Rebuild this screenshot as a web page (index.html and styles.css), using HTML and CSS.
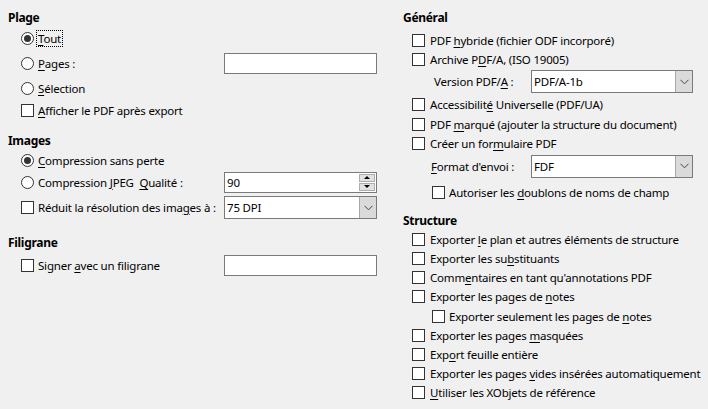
FILE: index.html
```html
<!DOCTYPE html>
<html lang="fr">
<head>
<meta charset="utf-8">
<link rel="stylesheet" href="styles.css">
</head>
<body>
<div class="page">
  <div class="col left">
    <div class="head h-plage">Plage</div>
    <div class="row r-tout"><span class="radio on"></span><span class="lbl focus"><u>T</u>out</span></div>
    <div class="row r-pages"><span class="radio"></span><span class="lbl"><u>P</u>ages :</span><span class="field"></span></div>
    <div class="row r-sel"><span class="radio"></span><span class="lbl"><u>S</u>élection</span></div>
    <div class="row r-aff"><span class="check"></span><span class="lbl"><u>A</u>fficher le PDF après export</span></div>

    <div class="head h-images">Images</div>
    <div class="row r-csp"><span class="radio on"></span><span class="lbl"><u>C</u>ompression sans perte</span></div>
    <div class="row r-jpeg"><span class="radio"></span><span class="lbl">Compression <u>J</u>PEG&nbsp; <u>Q</u>ualité :</span>
      <span class="field spin"><span class="val">90</span><span class="spinbtns"><span class="sb up"></span><span class="sb down"></span></span></span>
    </div>
    <div class="row r-red"><span class="check"></span><span class="lbl">Réduit la résolution des ima<u>g</u>es à :</span>
      <span class="field combo"><span class="val">75 DPI</span><span class="cbtn"><svg width="9" height="6" viewBox="0 0 9 6"><path d="M0.5 0.8 L4.5 4.8 L8.5 0.8" fill="none" stroke="#444" stroke-width="1"/></svg></span></span>
    </div>

    <div class="head h-fili">Filigrane</div>
    <div class="row r-sign"><span class="check"></span><span class="lbl">Signer <u>a</u>vec un filigrane</span><span class="field"></span></div>
  </div>

  <div class="col right">
    <div class="head h-gen">Général</div>
    <div class="row r-hyb"><span class="check"></span><span class="lbl">PDF <u>h</u>ybride (fichier ODF incorporé)</span></div>
    <div class="row r-arch"><span class="check"></span><span class="lbl">Archive P<u>D</u>F/A, (ISO 19005)</span></div>
    <div class="row r-ver"><span class="sublbl ver">Version PDF/<u>A</u> :</span>
      <span class="field combo wide"><span class="val">PDF/A-1b</span><span class="cbtn"><svg width="9" height="6" viewBox="0 0 9 6"><path d="M0.5 0.8 L4.5 4.8 L8.5 0.8" fill="none" stroke="#444" stroke-width="1"/></svg></span></span>
    </div>
    <div class="row r-acc"><span class="check"></span><span class="lbl">Accessibilit<u>é</u> Universelle (PDF/UA)</span></div>
    <div class="row r-marq"><span class="check"></span><span class="lbl">PDF <u>m</u>arqué (ajouter la structure du document)</span></div>
    <div class="row r-form"><span class="check"></span><span class="lbl">Créer un for<u>m</u>ulaire PDF</span></div>
    <div class="row r-fmt"><span class="sublbl fmt"><u>F</u>ormat d'envoi :</span>
      <span class="field combo wide"><span class="val">FDF</span><span class="cbtn"><svg width="9" height="6" viewBox="0 0 9 6"><path d="M0.5 0.8 L4.5 4.8 L8.5 0.8" fill="none" stroke="#444" stroke-width="1"/></svg></span></span>
    </div>
    <div class="row r-dbl indent"><span class="check"></span><span class="lbl">Autoriser les <u>d</u>oublons de noms de champ</span></div>

    <div class="head h-struct">Structure</div>
    <div class="row srow"><span class="check"></span><span class="lbl">Exporter <u>l</u>e plan et autres éléments de structure</span></div>
    <div class="row srow"><span class="check"></span><span class="lbl">Exporter les su<u>b</u>stituants</span></div>
    <div class="row srow"><span class="check"></span><span class="lbl">Comm<u>e</u>ntaires en tant qu'annotations PDF</span></div>
    <div class="row srow"><span class="check"></span><span class="lbl">Exporter les pages de <u>n</u>otes</span></div>
    <div class="row srow indent tall"><span class="check"></span><span class="lbl">Exporter seulement les pages de <u>n</u>otes</span></div>
    <div class="row srow"><span class="check"></span><span class="lbl">Exporter les pages <u>m</u>asquées</span></div>
    <div class="row srow"><span class="check"></span><span class="lbl">Exp<u>o</u>rt feuille entière</span></div>
    <div class="row srow"><span class="check"></span><span class="lbl">Exporter les pages <u>v</u>ides insérées automatiquement</span></div>
    <div class="row srow"><span class="check"></span><span class="lbl"><u>U</u>tiliser les XObjets de référence</span></div>
  </div>
</div>
</body>
</html>
```

FILE: styles.css
```css
* { box-sizing: border-box; }
html, body {
  margin: 0;
  padding: 0;
  background: #f0f0f0;
}
body {
  width: 708px;
  height: 409px;
  overflow: hidden;
  font-family: "Noto Sans", "Open Sans", sans-serif;
  font-size: 11.5px;
  letter-spacing: -0.2px;
  color: #000;
}
u { text-decoration: underline; text-underline-offset: 2px; }

.page {
  display: grid;
  grid-template-columns: 369px 305px;
  column-gap: 26px;
  padding: 7px 0 0 8px;
}
.col { display: flex; flex-direction: column; }

.head {
  font-weight: bold;
  font-size: 12px;
  letter-spacing: -0.3px;
  height: 21px;
  display: flex;
  align-items: center;
}

.row {
  display: flex;
  align-items: center;
  padding-left: 13px;
  white-space: nowrap;
}
.lbl { margin-left: 4px; line-height: 15px; }
.focus { outline: 1px dotted #000; outline-offset: 0; padding: 0 1px; margin-left: 3px; }

.radio {
  width: 13px; height: 13px;
  border: 1px solid #333;
  border-radius: 50%;
  background: #fff;
  flex: none;
  display: flex; align-items: center; justify-content: center;
}
.radio.on::after {
  content: "";
  width: 7px; height: 7px;
  border-radius: 50%;
  background: #333;
}
.check {
  width: 13px; height: 13px;
  border: 1px solid #333;
  background: #fff;
  flex: none;
}

.field {
  margin-left: auto;
  width: 153px;
  height: 21px;
  border: 1px solid #7a7a7a;
  background: #fff;
  display: flex;
  align-items: center;
}
.val { padding-left: 2px; flex: 1; }
.spinbtns {
  width: 17px;
  height: 100%;
  display: flex;
  flex-direction: column;
  padding: 1px 1px 1px 0;
  gap: 1px;
}
.sb {
  flex: 1;
  background: #e1e1e1;
  border: 1px solid #adadad;
  display: flex; align-items: center; justify-content: center;
}
.sb.up::after {
  content: "";
  border-left: 3px solid transparent;
  border-right: 3px solid transparent;
  border-bottom: 3px solid #000;
}
.sb.down::after {
  content: "";
  border-left: 3px solid transparent;
  border-right: 3px solid transparent;
  border-top: 3px solid #000;
}
.combo { height: 23px; }
.cbtn {
  width: 17px;
  height: 100%;
  background: #dadada;
  border-left: 1px solid #a8a8a8;
  display: flex; align-items: center; justify-content: center;
}
.wide { width: 162px; }

/* left rows */
.h-plage { height: 21px; }
.r-tout { height: 20px; }
.r-pages { height: 30px; }
.r-sel { height: 20px; }
.r-aff { height: 24px; }
.h-images { margin-top: 8px; height: 20px; }
.r-csp { height: 20px; }
.r-jpeg { height: 24px; }
.r-red { height: 27px; }
.h-fili { margin-top: 11px; height: 20px; }
.r-sign { height: 26px; }

/* right column */
.right .row { padding-left: 9px; }
.right .lbl { margin-left: 5px; }
.right .indent { padding-left: 29px; }
.right .indent .lbl { margin-left: 4px; }
.sublbl { flex: none; }
.ver { margin-left: 22px; width: 97px; }
.fmt { margin-left: 19px; width: 100px; }
.right .field { margin-left: 0; }
.r-hyb { margin-top: 2px; height: 20px; }
.r-arch { height: 19px; }
.r-ver { height: 25px; }
.r-acc { height: 20px; }
.r-marq { height: 21px; }
.r-form { height: 17px; }
.r-fmt { height: 28px; }
.r-dbl { height: 24px; }
.h-struct { margin-top: 6px; height: 20px; }
.srow { height: 19px; }
.srow.tall { height: 20px; }
```
